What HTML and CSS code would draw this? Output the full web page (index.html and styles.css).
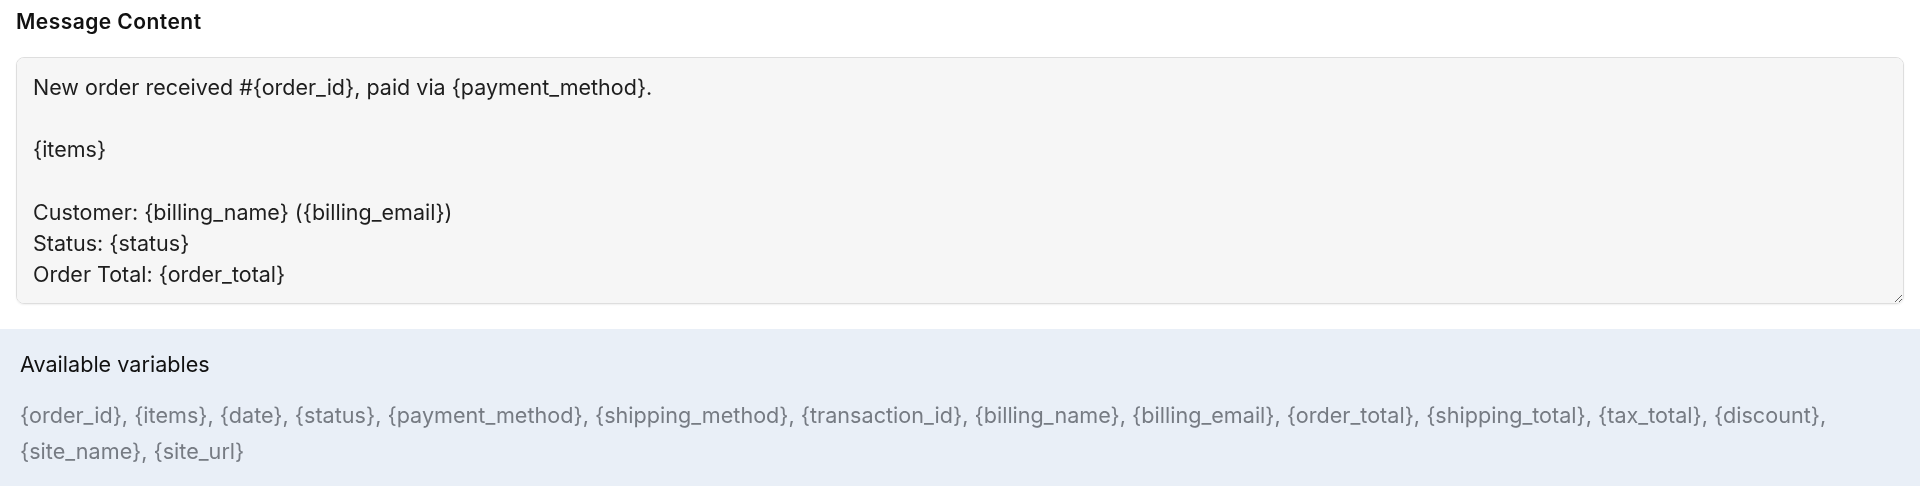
FILE: index.html
```html
<!DOCTYPE html>
<html lang="en">
<head>
<meta charset="utf-8">
<title>Message Content</title>
<link rel="stylesheet" href="styles.css">
</head>
<body>
  <section class="field">
    <h3 class="field-label">Message Content</h3>
    <div class="message-box">New order received #{order_id}, paid via {payment_method}.

{items}

Customer: {billing_name} ({billing_email})
Status: {status}
Order Total: {order_total}</div>
  </section>
  <aside class="vars-panel">
    <h4 class="vars-title">Available variables</h4>
    <p class="vars-list">{order_id}, {items}, {date}, {status}, {payment_method}, {shipping_method}, {transaction_id}, {billing_name}, {billing_email}, {order_total}, {shipping_total}, {tax_total}, {discount}, {site_name}, {site_url}</p>
  </aside>
</body>
</html>
```

FILE: styles.css
```css
html, body {
  margin: 0;
  padding: 0;
  background: #ffffff;
  font-family: Inter, "Liberation Sans", sans-serif;
  color: #1d1d1f;
}

.field {
  padding: 7px 16px 25px;
}

.field-label {
  margin: 0 0 20px;
  font-size: 21px;
  font-weight: 600;
  letter-spacing: 0.45px;
  line-height: 30px;
  color: #111111;
}

.message-box {
  box-sizing: border-box;
  height: 247px;
  padding: 14px 16px;
  background: #f6f6f6;
  border: 1px solid #dedede;
  border-radius: 8px;
  box-shadow: 0 1px 2px rgba(0, 0, 0, 0.06);
  white-space: pre-wrap;
  font-size: 21.5px;
  line-height: 31.2px;
  color: #1e1e1e;
  overflow: auto;
  resize: vertical;
}

.vars-panel {
  background: #e9eff7;
  padding: 20px 20px 30px;
  min-height: 157px;
  box-sizing: border-box;
}

.vars-title {
  margin: 0 0 19px;
  font-size: 21.6px;
  font-weight: 400;
  line-height: 30px;
  color: #111111;
}

.vars-list {
  margin: 0;
  font-size: 21.6px;
  line-height: 35.5px;
  color: #767b83;
}
```
